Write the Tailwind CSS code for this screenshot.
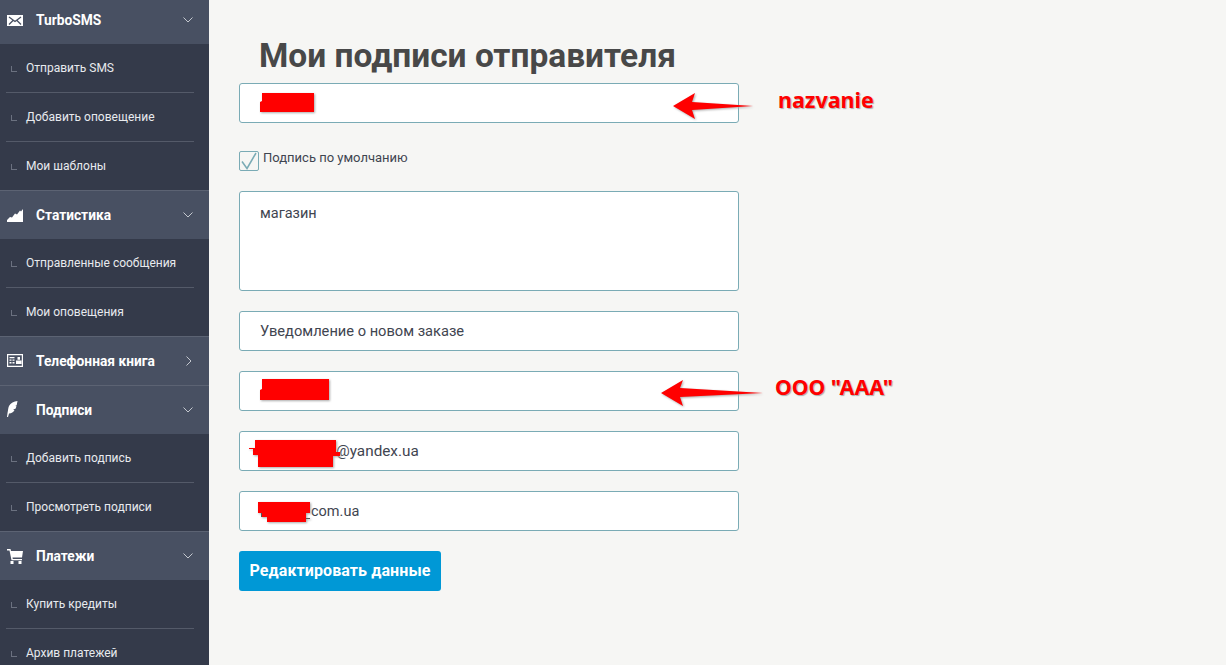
<!DOCTYPE html>
<html lang="ru">
<head>
    <meta charset="UTF-8">
    <title>Мои подписи отправителя</title>
    <script src="https://cdn.jsdelivr.net/npm/@tailwindcss/browser@4"></script>
</head>
<body class="bg-[#f6f6f4] h-screen overflow-hidden font-['Roboto',sans-serif]">
<div class="relative flex h-[665px] overflow-hidden">
    <!-- sidebar -->
    <nav class="w-[209px] shrink-0 bg-[#343a4a] text-white -mt-[4px]">
        <a class="flex items-center h-[48px] bg-[#485062]">
            <svg class="ml-[7px] w-[16px] h-[11px]" viewBox="0 0 16 11"><path fill="#fff" d="M0 0h16v11H0z"/><path fill="none" stroke="#485062" stroke-width="1.300" d="M2 2l6 4.500L14 2M2 9.500l4-4M14 9.500l-4-4"/></svg>
            <span class="ml-[13px] text-[13.750px] font-bold flex-1">TurboSMS</span>
            <svg class="mr-[16px] w-[10px] h-[6px]" viewBox="0 0 10 6"><path fill="none" stroke="#e5e7eb" stroke-width="0.800" d="M0.500 0.500L5 5l4.500-4.500"/></svg>
        </a>
        <div class="h-[146px] pl-[6px] pr-[15px]">
            <a class="flex items-center h-[49px] border-b border-[#545a69] text-[12px] text-[#e8eaee]"><span class="ml-[5px] mr-[9px] w-[6px] h-[6px] mt-[2px] border-l border-b border-[#6b7180]"></span>Отправить SMS</a>
            <a class="flex items-center h-[49px] border-b border-[#545a69] text-[12px] text-[#e8eaee]"><span class="ml-[5px] mr-[9px] w-[6px] h-[6px] mt-[2px] border-l border-b border-[#6b7180]"></span>Добавить оповещение</a>
            <a class="flex items-center h-[48px] text-[12px] text-[#e8eaee]"><span class="ml-[5px] mr-[9px] w-[6px] h-[6px] mt-[2px] border-l border-b border-[#6b7180]"></span>Мои шаблоны</a>
        </div>
        <a class="flex items-center h-[49px] bg-[#485062] border-t border-[#5c6373]">
            <svg class="ml-[7px] w-[16px] h-[13px]" viewBox="0 0 16 13"><path fill="#fff" d="M0 13v-2l3-3 2 .5 3-4 2 1 3-4 1 1 2-2.500v13z"/></svg>
            <span class="ml-[13px] text-[13.750px] font-bold flex-1">Статистика</span>
            <svg class="mr-[16px] w-[10px] h-[6px]" viewBox="0 0 10 6"><path fill="none" stroke="#e5e7eb" stroke-width="0.800" d="M0.500 0.500L5 5l4.500-4.500"/></svg>
        </a>
        <div class="h-[97px] pl-[6px] pr-[15px]">
            <a class="flex items-center h-[49px] border-b border-[#545a69] text-[12px] text-[#e8eaee]"><span class="ml-[5px] mr-[9px] w-[6px] h-[6px] mt-[2px] border-l border-b border-[#6b7180]"></span>Отправленные сообщения</a>
            <a class="flex items-center h-[48px] text-[12px] text-[#e8eaee]"><span class="ml-[5px] mr-[9px] w-[6px] h-[6px] mt-[2px] border-l border-b border-[#6b7180]"></span>Мои оповещения</a>
        </div>
        <a class="flex items-center h-[49px] bg-[#485062] border-t border-[#5c6373]">
            <svg class="ml-[7px] w-[16px] h-[13px] -mt-[2px]" viewBox="0 0 16 13"><path fill="#fff" fill-rule="evenodd" d="M0 0h16v13H0zM1.200 1.200v10.600h13.600V1.200zM2.500 3h5v1.200h-5zM2.500 5.500h2v1.200h-2zM5.500 5.500h2v1.200h-2zM2.500 8h2v1.500h-2zM5.500 8h2v1.500h-2zM10.500 3h2.500v2.800h-2.500zM9 6.500h5.500V10H9z"/></svg>
            <span class="ml-[13px] text-[13.750px] font-bold flex-1">Телефонная книга</span>
            <svg class="mr-[17px] w-[6px] h-[10px]" viewBox="0 0 6 10"><path fill="none" stroke="#e5e7eb" stroke-width="0.800" d="M0.500 0.500L5 5 0.500 9.500"/></svg>
        </a>
        <a class="flex items-center h-[49px] bg-[#485062] border-t border-[#5c6373]">
            <svg class="ml-[7px] w-[11px] h-[16px] -mt-[3px] mr-[5px]" viewBox="0 0 11 16"><path fill="#fff" d="M10.500 0C7 .5 3.500 2 2 5 1 7.500 1 10 .5 12L0 16h1l1-3.500c2.500 0 4.500-1.500 5.500-3.500L6 8.500l2.500-.8 1-2.500-1.300-.2 1.500-.8z"/></svg>
            <span class="ml-[13px] text-[13.750px] font-bold flex-1">Подписи</span>
            <svg class="mr-[16px] w-[10px] h-[6px]" viewBox="0 0 10 6"><path fill="none" stroke="#e5e7eb" stroke-width="0.800" d="M0.500 0.500L5 5l4.500-4.500"/></svg>
        </a>
        <div class="h-[97px] pl-[6px] pr-[15px]">
            <a class="flex items-center h-[49px] border-b border-[#545a69] text-[12px] text-[#e8eaee]"><span class="ml-[5px] mr-[9px] w-[6px] h-[6px] mt-[2px] border-l border-b border-[#6b7180]"></span>Добавить подпись</a>
            <a class="flex items-center h-[48px] text-[12px] text-[#e8eaee]"><span class="ml-[5px] mr-[9px] w-[6px] h-[6px] mt-[2px] border-l border-b border-[#6b7180]"></span>Просмотреть подписи</a>
        </div>
        <a class="flex items-center h-[49px] bg-[#485062] border-t border-[#5c6373]">
            <svg class="ml-[7px] w-[16px] h-[16px]" viewBox="0 0 16 16"><path fill="#fff" d="M0 1h3.500l.5 2h12l-1 6.500H5.500l.3 1.500H15v1.200H4.500L2.500 2.500H0z"/><path fill="#fff" d="M3.500 13h3v3h-3zM11.500 13h3v3h-3z"/></svg>
            <span class="ml-[13px] text-[13.750px] font-bold flex-1">Платежи</span>
            <svg class="mr-[16px] w-[10px] h-[6px]" viewBox="0 0 10 6"><path fill="none" stroke="#e5e7eb" stroke-width="0.800" d="M0.500 0.500L5 5l4.500-4.500"/></svg>
        </a>
        <div class="pl-[6px] pr-[15px]">
            <a class="flex items-center h-[49px] border-b border-[#545a69] text-[12px] text-[#e8eaee]"><span class="ml-[5px] mr-[9px] w-[6px] h-[6px] mt-[2px] border-l border-b border-[#6b7180]"></span>Купить кредиты</a>
            <a class="flex items-center h-[48px] text-[12px] text-[#e8eaee]"><span class="ml-[5px] mr-[9px] w-[6px] h-[6px] mt-[2px] border-l border-b border-[#6b7180]"></span>Архив платежей</a>
        </div>
    </nav>

    <!-- form -->
    <main class="pl-[30px] pt-[34px] w-[530px] text-[#3f4550]">
        <h1 class="ml-[20px] h-[49px] leading-[44px] text-[33.500px] font-bold text-[#484848] whitespace-nowrap">Мои подписи отправителя</h1>
        <div class="h-[40px] w-[500px] bg-white border border-[#7aabb5] rounded-[3px]"></div>
        <label class="flex mt-[28px] h-[20px]">
            <span class="w-[20px] h-[20px] border border-[#7aabb5] rounded-[2px] bg-[#f6f6f4] flex items-center justify-center">
                <svg class="w-[18px] h-[18px]" viewBox="0 0 18 18"><path fill="none" stroke="#7aabb5" stroke-width="1.500" d="M2 9.500l5 7L16 1"/></svg>
            </span>
            <span class="ml-[4px] -mt-[3px] text-[13px]">Подпись по умолчанию</span>
        </label>
        <div class="mt-[20px] h-[100px] w-[500px] bg-white border border-[#7aabb5] rounded-[3px] px-[20px] pt-[11px] text-[14.500px]">магазин</div>
        <div class="mt-[20px] h-[40px] w-[500px] bg-white border border-[#7aabb5] rounded-[3px] px-[20px] leading-[38px] text-[14.650px]">Уведомление о новом заказе</div>
        <div class="mt-[20px] h-[40px] w-[500px] bg-white border border-[#7aabb5] rounded-[3px]"></div>
        <div class="mt-[20px] h-[40px] w-[500px] bg-white border border-[#7aabb5] rounded-[3px] pl-[96px] leading-[38px] text-[15.300px]">@yandex.ua</div>
        <div class="mt-[20px] h-[40px] w-[500px] bg-white border border-[#7aabb5] rounded-[3px] pl-[71px] leading-[40px] text-[14.500px]">com.ua</div>
        <button class="mt-[20px] block h-[40px] w-[202px] bg-[#0098d6] rounded-[3px] text-white text-[16px] tracking-[0.100px] font-bold whitespace-nowrap">Редактировать данные</button>
    </main>

    <!-- red annotations drawn over the screenshot -->
    <svg class="absolute left-0 top-0 w-[1226px] h-[665px] pointer-events-none drop-shadow-[1px_1px_1px_#aaa]" viewBox="0 0 1226 665">
        <path fill="#555" d="M261 511h8v6h-8zM300 518h10v1h-10z"/>
        <g fill="#ff0000">
            <path d="M262 93h52v9l0 0v10h-54v-10l2-1z"/>
            <path d="M262 379h67v21h-69v-10l2-1z"/>
            <path d="M255 440h81v12h4v4h-7v11h-75v-12h-5v-6h-4v-1h6z"/>
            <path d="M258 502h52v11h-4v9h-39v-5h-5v-4h-4z"/>
            <path d="M673 106l22-13-3 9 61 4-61 4 3 9z"/>
            <path d="M661 393l22-13-3 8 83 5-83 4 3 9z"/>
        </g>
    </svg>
    <span class="absolute left-[778px] top-[85px] text-[21.500px] leading-[30px] font-bold text-[#ff0000] [text-shadow:1px_1px_1px_#aaa] font-['Noto_Sans',sans-serif]">nazvanie</span>
    <span class="absolute left-[775px] top-[372px] text-[21.500px] leading-[30px] font-bold text-[#ff0000] [text-shadow:1px_1px_1px_#aaa] font-['Noto_Sans',sans-serif]">ООО "ААА"</span>
</div>
</body>
</html>
